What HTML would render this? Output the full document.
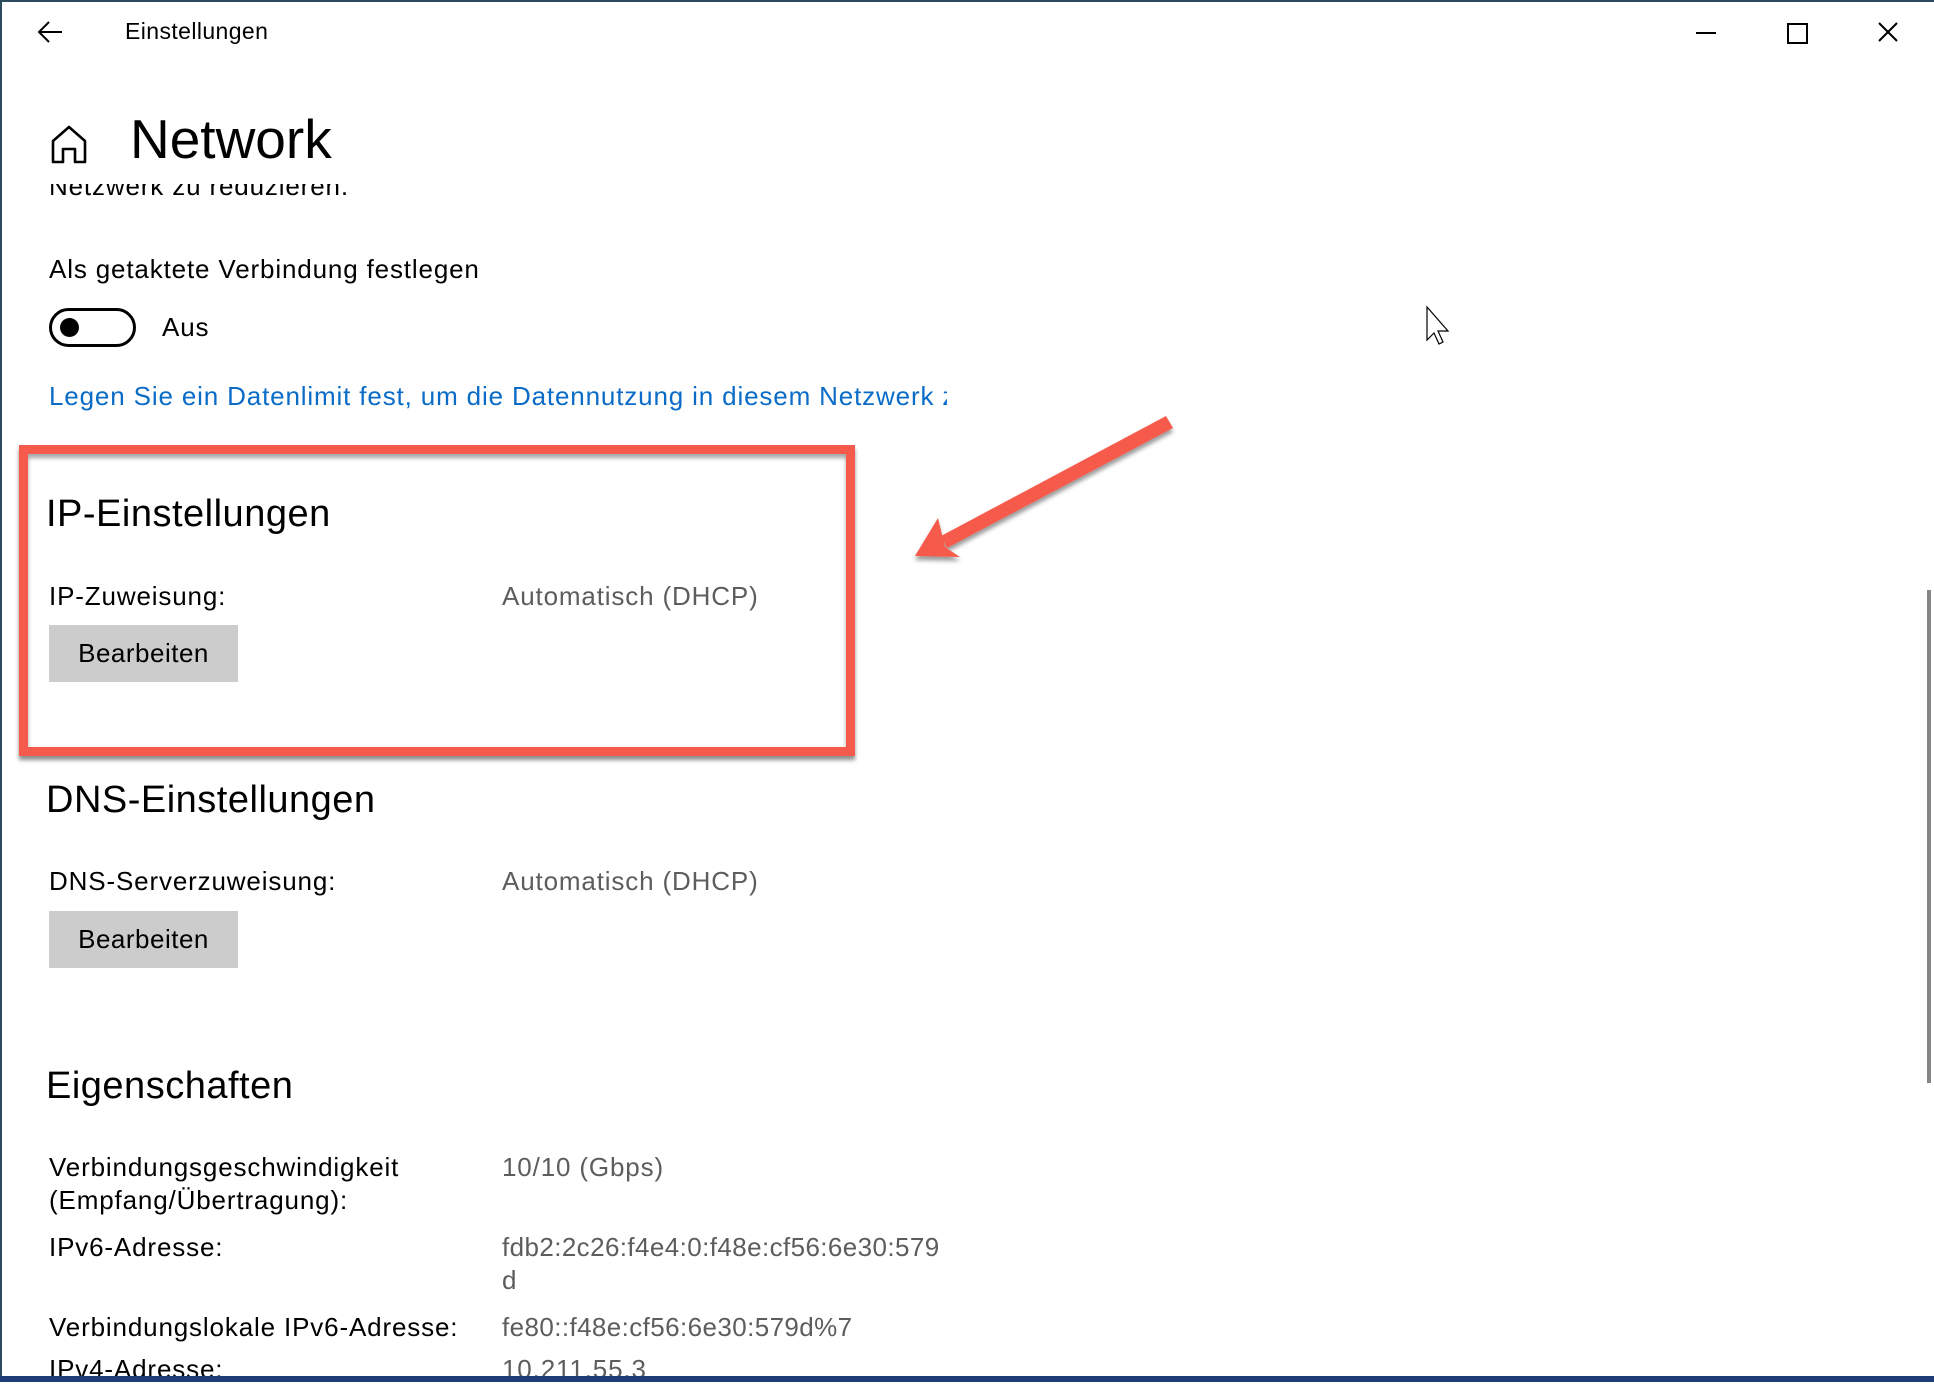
<!DOCTYPE html>
<html><head><meta charset="utf-8"><style>
html,body{margin:0;padding:0}
body{width:1934px;height:1382px;position:relative;overflow:hidden;background:#fff;font-family:"Liberation Sans",sans-serif;color:#000}
.t{position:absolute;white-space:nowrap;line-height:1}
.b{font-size:26px;letter-spacing:.85px}
.g{color:#5d5d5d}
.h{font-size:38px;letter-spacing:.5px}
.btn{position:absolute;left:49px;width:189px;height:57px;background:#cccccc;font-size:26px;letter-spacing:.5px;display:flex;align-items:center;justify-content:center}
</style></head><body>
<div style="position:absolute;left:0;top:0;width:1934px;height:2px;background:#2b4a5e"></div>
<div style="position:absolute;left:0;top:0;width:2px;height:1382px;background:#2b4a5e"></div>
<div style="position:absolute;left:1927px;top:590px;width:4px;height:493px;background:#858585"></div>

<svg style="position:absolute;left:36px;top:20px" width="28" height="24" viewBox="0 0 28 24"><path d="M26 12H3M13 2L3 12l10 10" fill="none" stroke="#000" stroke-width="2"/></svg>
<div class="t" style="left:125px;top:20px;font-size:23px;letter-spacing:.4px">Einstellungen</div>
<div style="position:absolute;left:1696px;top:32px;width:20px;height:2px;background:#000"></div>
<div style="position:absolute;left:1787px;top:23px;width:17px;height:17px;border:2px solid #000"></div>
<svg style="position:absolute;left:1878px;top:22px" width="20" height="20"><path d="M1 1L19 19M19 1L1 19" stroke="#000" stroke-width="2"/></svg>

<svg style="position:absolute;left:50px;top:124px" width="38" height="40" viewBox="0 0 38 40"><path d="M3 38V17L19 3l16 14v21H25V25H13v13z" fill="none" stroke="#000" stroke-width="2.6" stroke-linejoin="round"/></svg>
<div class="t" style="left:130px;top:112px;font-size:55px">Network</div>

<div style="position:absolute;left:49px;top:184px;width:500px;height:20px;overflow:hidden"><div class="t b" style="top:-11px;left:0">Netzwerk zu reduzieren.</div></div>

<div class="t b" style="left:49px;top:256px">Als getaktete Verbindung festlegen</div>
<div style="position:absolute;left:49px;top:308px;width:81px;height:33px;border:3px solid #000;border-radius:20px"></div>
<div style="position:absolute;left:60px;top:318px;width:19px;height:19px;border-radius:50%;background:#000"></div>
<div class="t b" style="left:162px;top:314px">Aus</div>
<div style="position:absolute;left:49px;top:380px;width:898px;height:34px;overflow:hidden"><div class="t b" style="top:3px;left:0;color:#0a6cc7">Legen Sie ein Datenlimit fest, um die Datennutzung in diesem Netzwerk zu reduzieren.</div></div>

<div style="position:absolute;left:19px;top:445px;width:818px;height:293px;border:9px solid #f65a4c;box-shadow:0 4px 4px rgba(0,0,0,.45), inset 0 4px 4px rgba(0,0,0,.35)"></div>

<div class="t h" style="left:46px;top:495px">IP-Einstellungen</div>
<div class="t b" style="left:49px;top:583px">IP-Zuweisung:</div>
<div class="t b g" style="left:502px;top:583px">Automatisch (DHCP)</div>
<div class="btn" style="top:625px">Bearbeiten</div>

<div class="t h" style="left:46px;top:781px">DNS-Einstellungen</div>
<div class="t b" style="left:49px;top:868px">DNS-Serverzuweisung:</div>
<div class="t b g" style="left:502px;top:868px">Automatisch (DHCP)</div>
<div class="btn" style="top:911px">Bearbeiten</div>

<div class="t h" style="left:46px;top:1067px">Eigenschaften</div>
<div class="t b" style="left:49px;top:1154px">Verbindungsgeschwindigkeit</div>
<div class="t b" style="left:49px;top:1187px">(Empfang/Übertragung):</div>
<div class="t b g" style="left:502px;top:1154px">10/10 (Gbps)</div>
<div class="t b" style="left:49px;top:1234px">IPv6-Adresse:</div>
<div class="t b g" style="left:502px;top:1234px;letter-spacing:.4px">fdb2:2c26:f4e4:0:f48e:cf56:6e30:579</div>
<div class="t b g" style="left:502px;top:1267px">d</div>
<div class="t b" style="left:49px;top:1314px">Verbindungslokale IPv6-Adresse:</div>
<div class="t b g" style="left:502px;top:1314px;letter-spacing:.4px">fe80::f48e:cf56:6e30:579d%7</div>
<div class="t b" style="left:49px;top:1356px">IPv4-Adresse:</div>
<div class="t b g" style="left:502px;top:1356px">10.211.55.3</div>
<div style="position:absolute;left:0;top:1376px;width:1934px;height:6px;background:#1d3c78"></div>

<svg style="position:absolute;left:0;top:0" width="1934" height="1382">
<defs><filter id="s" x="-20%" y="-20%" width="140%" height="140%"><feDropShadow dx="0" dy="4" stdDeviation="2" flood-color="#000" flood-opacity=".4"/></filter></defs>
<g filter="url(#s)" fill="#f65a4c">
<path d="M1166 416L1173 428 947 548 941 536z"/>
<path d="M915 556L938 518 945 547 960 557z"/>
</g>
<path d="M1427 307V340l7-7 5 11 4-2-5-11h10z" fill="#fff" stroke="#000" stroke-width="1.2"/>
</svg>
</body></html>
